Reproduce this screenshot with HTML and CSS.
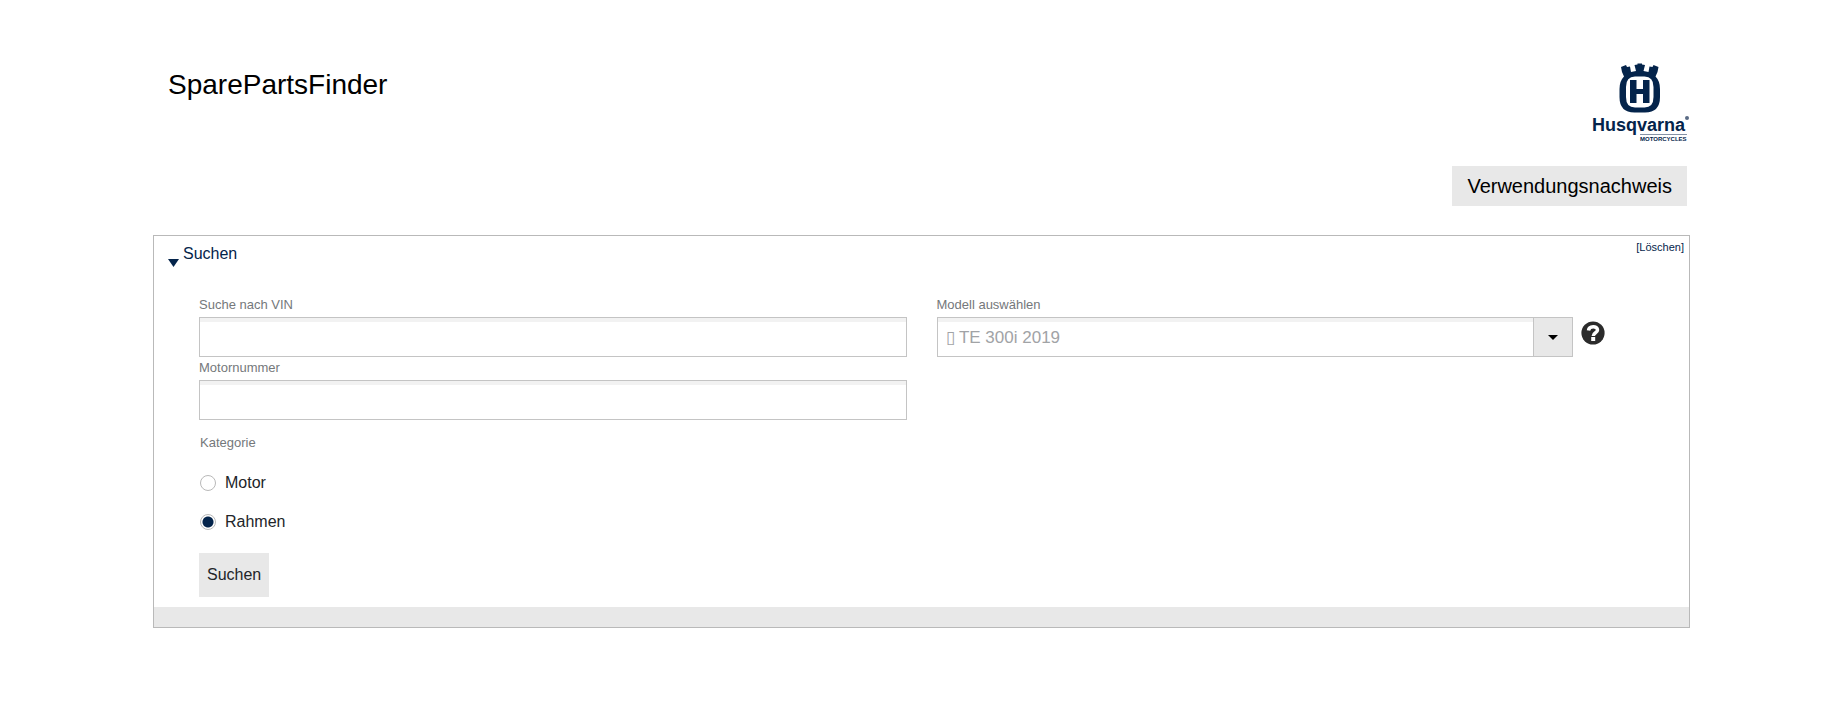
FILE: index.html
```
<!DOCTYPE html>
<html lang="de">
<head>
    <meta charset="UTF-8">
    <meta name="viewport" content="width=device-width, initial-scale=1.0">
    <title>SparePartsFinder</title>
    <link rel="stylesheet" href="styles.css">
</head>
<body>
    <div class="page">
        <header class="header">
            <h1 class="title">SparePartsFinder</h1>
            <svg class="logo" width="98" height="80" viewBox="0 0 98 80" role="img" aria-label="Husqvarna Motorcycles">
                <g fill="#04244b">
                    <path d="M29 4 L34 2 L35 4 L38 3.500 L39 9 L44 8 L42.500 2 L45.500 1.500 V0.500 H50 V1.500 L53 2 L51.500 8 L56.500 9 L57.500 3.500 L60.500 4 L61.500 2 L66.500 4 L65.500 9 L63.500 13.500 Q68 18 68 26 V34 Q68 49.500 53 49.500 H42.500 Q27.500 49.500 27.500 34 V26 Q27.500 18 32 13.500 L30 9 Z"/>
                    <path fill="#fff" d="M43 13.500 H52.500 Q61.500 13.500 61.500 24 V34 Q61.500 44.500 52.500 44.500 H43 Q34 44.500 34 34 V24 Q34 13.500 43 13.500 Z"/>
                    <path d="M38 17 H44.500 V26 H51 V17 H57.500 V40 H51 V31 H44.500 V40 H38 Z"/>
                </g>
                <text class="logo-name" x="0" y="68">Husqvarna</text>
                <circle cx="95" cy="55" r="2" fill="#5a6b85"/>
                <path d="M48 71.500 H95" stroke="#8592a5"/>
                <text class="logo-sub" x="48" y="78">MOTORCYCLES</text>
            </svg>
        </header>

        <div class="actions">
            <button type="button" class="btn btn-usage">Verwendungsnachweis</button>
        </div>

        <form class="panel">
            <div class="panel-header">
                <h2 class="panel-title">Suchen</h2>
                <a class="clear" href="#">[Löschen]</a>
            </div>
            <div class="panel-body">
                <div class="columns">
                    <div class="column">
                        <label class="label" for="vin">Suche nach VIN</label>
                        <input class="input" type="text" id="vin">
                        <label class="label" for="engine">Motornummer</label>
                        <input class="input" type="text" id="engine">
                    </div>
                    <div class="column">
                        <label class="label" for="model">Modell auswählen</label>
                        <div class="model-row">
                            <div class="select-wrap">
                                <select class="input select" id="model">
                                    <option>▯ TE 300i 2019</option>
                                </select>
                                <span class="select-arrow"></span>
                            </div>
                            <svg class="help" width="24" height="24" viewBox="0 0 24 24" role="img" aria-label="Hilfe">
                                <circle cx="12" cy="12" r="11.600" fill="#2b2b2b"/>
                                <path d="M7.500 9.500 C8 4.500 16.500 4.500 16.500 9 C16.500 12 12.300 11.500 12.300 15" fill="none" stroke="#fff" stroke-width="3.500"/>
                                <path d="M10.200 16 H14.200 V20 H10.200 Z" fill="#fff"/>
                            </svg>
                        </div>
                    </div>
                </div>

                <fieldset class="category">
                    <legend class="label">Kategorie</legend>
                    <label class="option"><input class="radio" type="radio" name="category">Motor</label>
                    <label class="option"><input class="radio" type="radio" name="category" checked>Rahmen</label>
                </fieldset>

                <button type="button" class="btn btn-search">Suchen</button>
            </div>
            <div class="panel-footer"></div>
        </form>
    </div>
</body>
</html>
```
FILE: styles.css
```
* {
    box-sizing: border-box;
}

body {
    margin: 0;
    background: #fff;
    color: #000;
    font-family: "Liberation Sans", Arial, sans-serif;
    font-size: 16px;
}

.page {
    padding: 63px 153px 40px;
}

.header {
    display: flex;
    justify-content: space-between;
    align-items: flex-start;
    padding-left: 15px;
}

.title {
    margin: 0;
    padding-top: 4px;
    font-size: 28px;
    font-weight: normal;
    line-height: 36px;
}

.logo {
    display: block;
}

.logo-name {
    fill: #04244b;
    font-size: 18px;
    font-weight: bold;
}

.logo-sub {
    fill: #04244b;
    font-size: 6px;
    font-weight: bold;
}

.actions {
    display: flex;
    justify-content: flex-end;
    padding: 23px 3px 29px;
}

.btn {
    border: 0;
    background: #e8e8e8;
    font-family: inherit;
    cursor: pointer;
}

.btn-usage {
    height: 40px;
    padding: 0 15px;
    color: #000;
    font-size: 20px;
}

.btn-search {
    height: 44px;
    padding: 0 8px;
    color: #222529;
    font-size: 16px;
}

.panel {
    border: 1px solid #b9b9b9;
}

.panel-header {
    display: flex;
    justify-content: space-between;
    align-items: flex-start;
    padding: 3px 5px 0 14px;
}

.panel-title {
    display: flex;
    gap: 4px;
    margin: 0;
    padding-top: 5px;
    color: #04244b;
    font-size: 16px;
    font-weight: normal;
    line-height: 20px;
}

.panel-title::before {
    content: "";
    align-self: flex-end;
    width: 11px;
    height: 8px;
    margin-bottom: -3px;
    background: #04244b;
    clip-path: polygon(0 0, 100% 0, 50% 100%);
}

.clear {
    color: #04244b;
    font-size: 11px;
    line-height: 16px;
    text-decoration: none;
}

.panel-body {
    padding: 30px 45px 10px;
}

.columns {
    display: grid;
    grid-template-columns: 1fr 1fr;
    gap: 30px;
}

.label {
    display: block;
    padding: 0 0 1px;
    color: #75787b;
    font-size: 13px;
    line-height: 22px;
}

.input {
    display: block;
    width: 100%;
    height: 40px;
    padding: 0 8px;
    border: 1px solid #c4c4c4;
    border-radius: 0;
    background: #fff;
    box-shadow: inset 0 4px #f2f2f2;
    color: #a1a3a6;
    font-family: inherit;
    font-size: 17px;
}

.model-row {
    display: flex;
    gap: 8px;
}

.select-wrap {
    position: relative;
    width: 90%;
}

.select {
    appearance: none;
}

.select-arrow {
    position: absolute;
    top: 0;
    right: 0;
    display: flex;
    align-items: center;
    justify-content: center;
    width: 40px;
    height: 40px;
    border: 1px solid #c4c4c4;
    background: #e8e8e8;
    pointer-events: none;
}

.select-arrow::after {
    content: "";
    border: 5px solid transparent;
    border-top-color: #000;
    border-bottom: 0;
}

.help {
    margin-top: 4px;
}

.category {
    margin: 0;
    padding: 8px 1px 12px;
    border: 0;
}

.category .label {
    padding-top: 12px;
}

.option {
    display: flex;
    align-items: center;
    gap: 9px;
    height: 39px;
    color: #222529;
}

.radio {
    appearance: none;
    width: 16px;
    height: 16px;
    margin: 0;
    border: 1px solid #b9b9b9;
    border-radius: 50%;
    background: #fff;
}

.radio:checked {
    background: radial-gradient(circle, #04244b 5px, #fff 6px);
}

.panel-footer {
    height: 20px;
    background: #e8e8e8;
}
```
